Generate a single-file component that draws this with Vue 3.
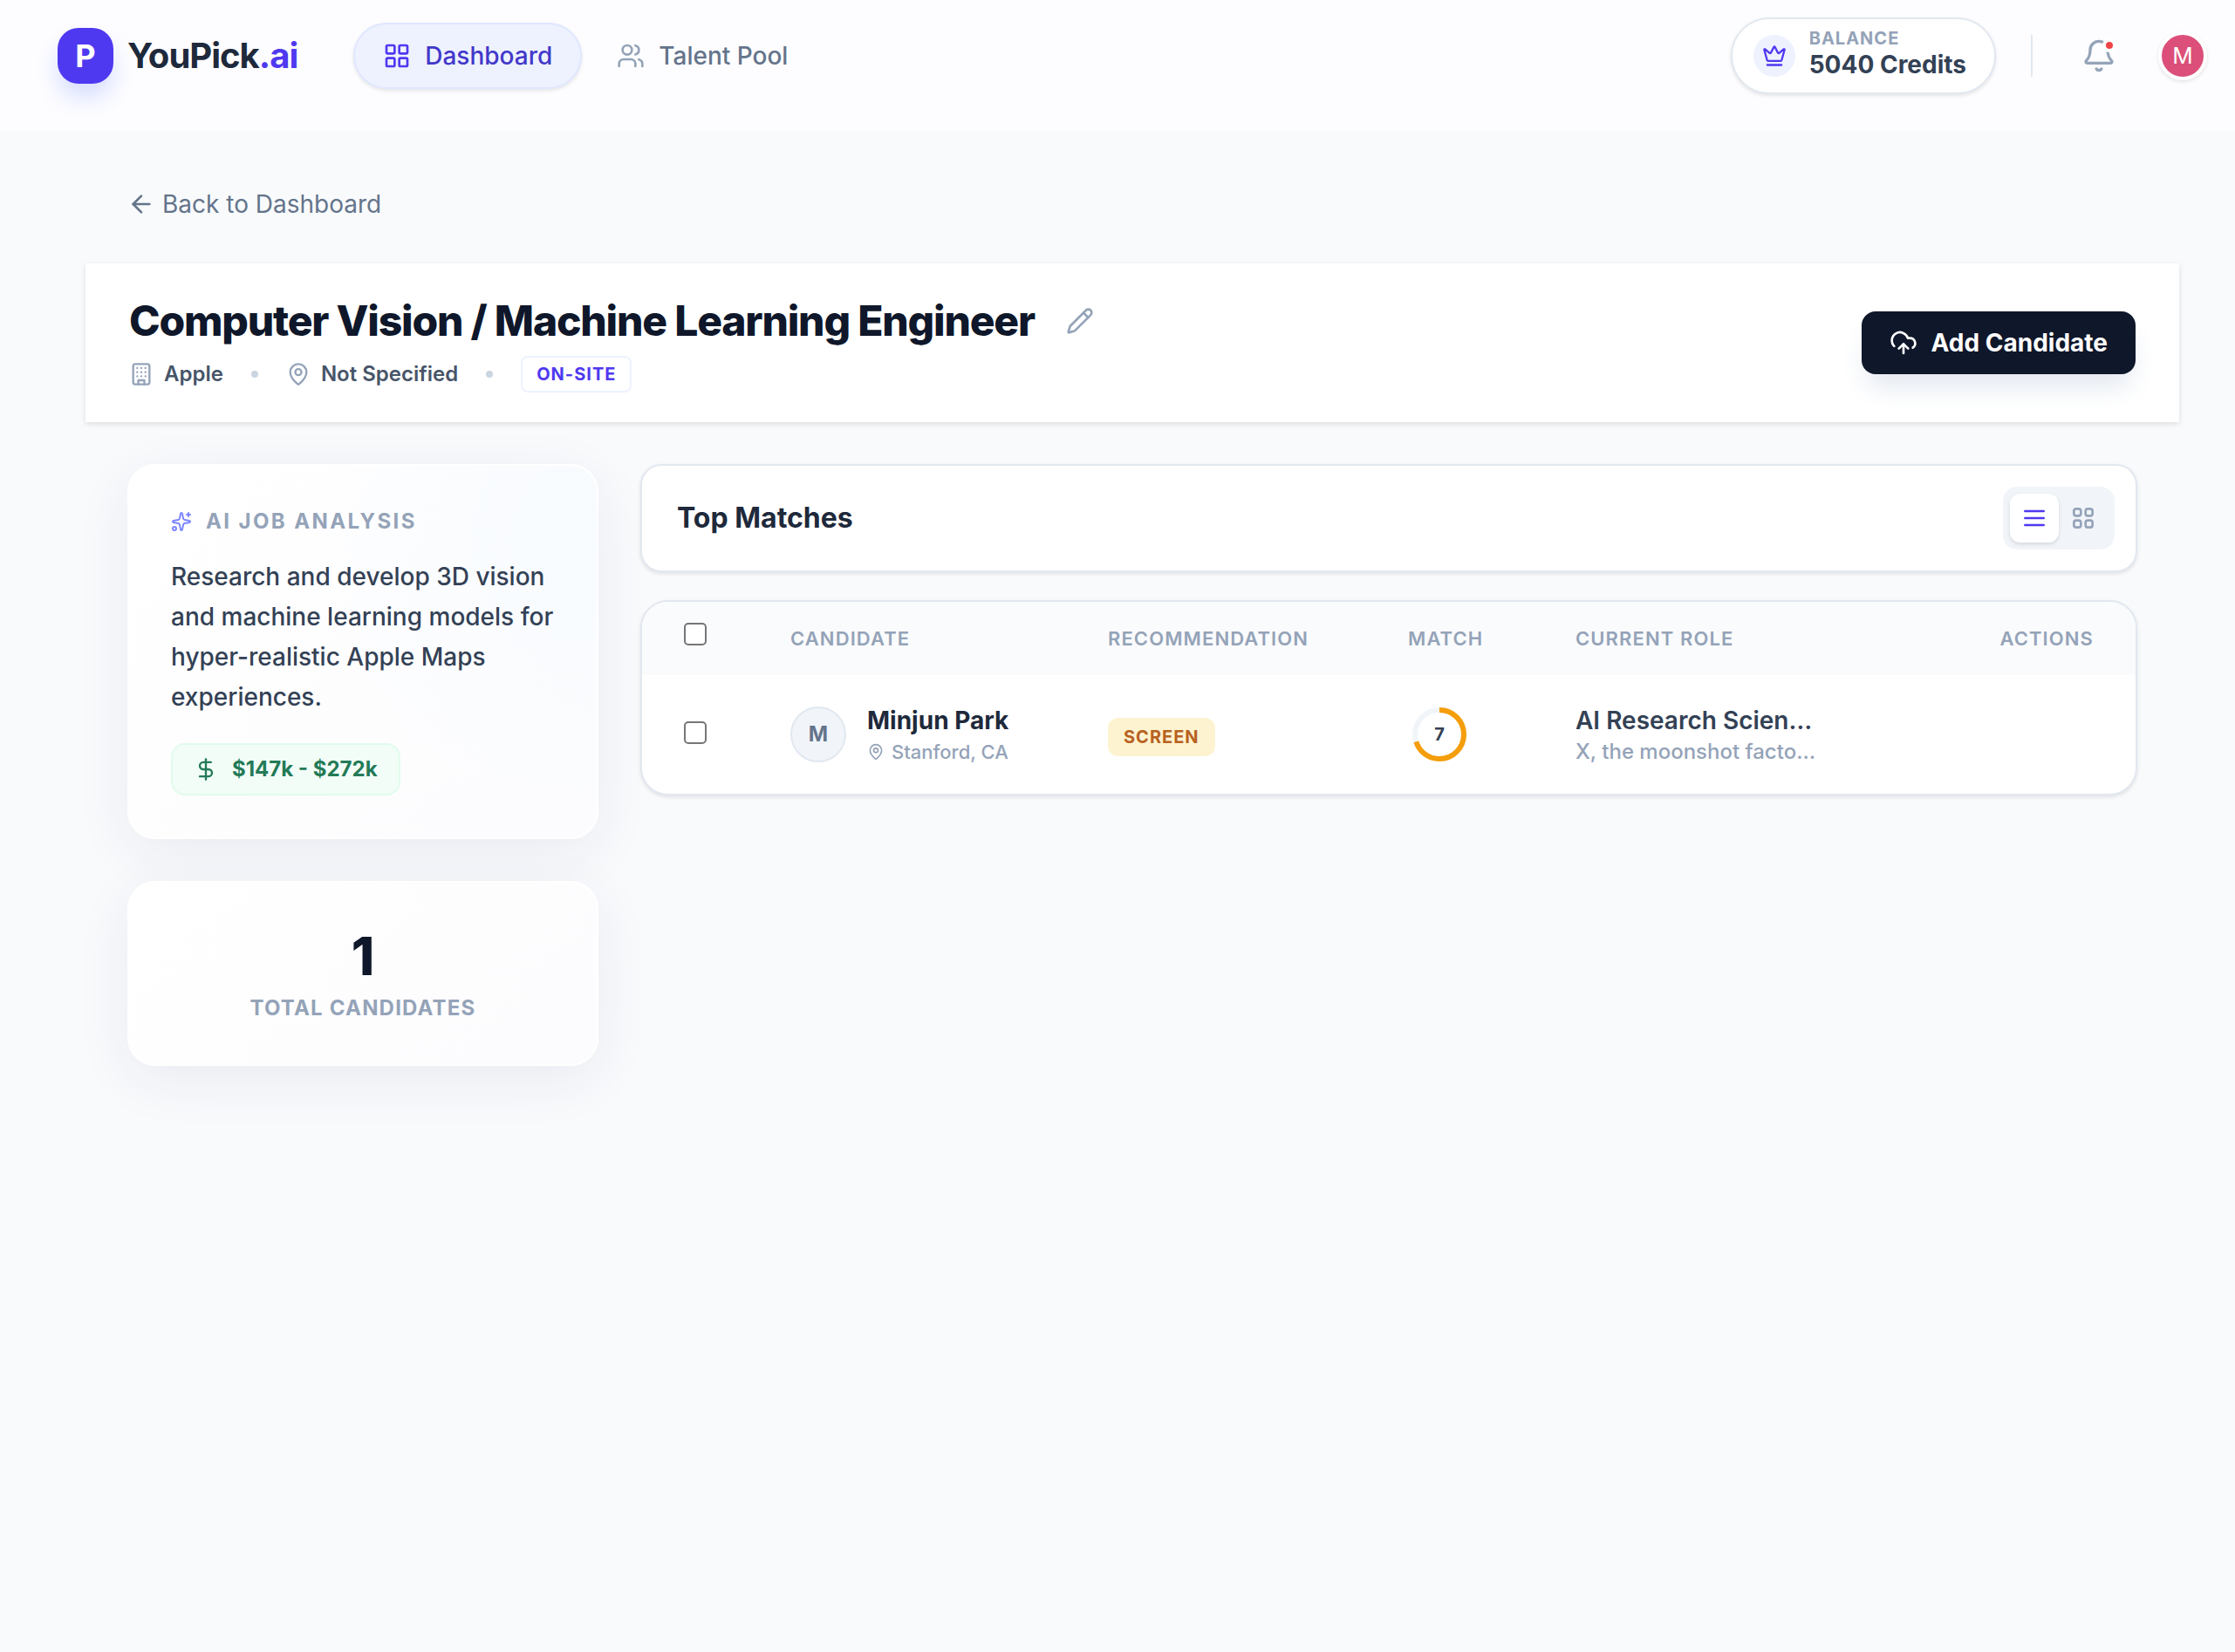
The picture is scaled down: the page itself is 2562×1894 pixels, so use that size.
<script setup>
import { ref } from 'vue'

const view = ref('list')
const selected = ref([])

const job = {
  title: 'Computer Vision / Machine Learning Engineer',
  company: 'Apple',
  location: 'Not Specified',
  workMode: 'On-site',
  summary:
    'Research and develop 3D vision and machine learning models for hyper-realistic Apple Maps experiences.',
  salary: '$147k - $272k',
}

const candidates = [
  {
    id: 1,
    name: 'Minjun Park',
    location: 'Stanford, CA',
    recommendation: 'Screen',
    score: 7,
    role: 'AI Research Scien…',
    company: 'X, the moonshot facto…',
  },
]

// match ring, score is out of 10
const ringLength = 2 * Math.PI * 28
const ringDash = (score) => `${(ringLength * score) / 10} ${ringLength}`

function toggleAll(e) {
  selected.value = e.target.checked ? candidates.map((c) => c.id) : []
}
</script>

<template>
  <div class="page">
    <header class="topbar">
      <a href="#" class="brand">
        <span class="brandMark">P</span>
        <span class="brandName">YouPick<span class="brandTld">.ai</span></span>
      </a>

      <nav class="nav">
        <a href="#" class="navItem active" aria-current="page">
          <svg class="icon i32" viewBox="0 0 24 24">
            <rect x="3" y="3" width="7" height="7" rx="1" />
            <rect x="14" y="3" width="7" height="7" rx="1" />
            <rect x="14" y="14" width="7" height="7" rx="1" />
            <rect x="3" y="14" width="7" height="7" rx="1" />
          </svg>
          Dashboard
        </a>
        <a href="#" class="navItem">
          <svg class="icon i32" viewBox="0 0 24 24">
            <path d="M16 21v-2a4 4 0 0 0-4-4H6a4 4 0 0 0-4 4v2" />
            <circle cx="9" cy="7" r="4" />
            <path d="M22 21v-2a4 4 0 0 0-3-3.87" />
            <path d="M16 3.13a4 4 0 0 1 0 7.75" />
          </svg>
          Talent Pool
        </a>
      </nav>

      <div class="account">
        <a href="#" class="balance">
          <span class="balanceIcon">
            <svg class="icon i28" viewBox="0 0 24 24">
              <path d="M11.562 3.266a.5.5 0 0 1 .876 0L15.39 8.87a1 1 0 0 0 1.516.294L21.183 5.5a.5.5 0 0 1 .798.519l-2.834 10.246a1 1 0 0 1-.956.734H5.81a1 1 0 0 1-.957-.734L2.02 6.02a.5.5 0 0 1 .798-.519l4.276 3.664a1 1 0 0 0 1.516-.294z" />
              <path d="M5 21h14" />
            </svg>
          </span>
          <span class="balanceText">
            <span class="balanceLabel">BALANCE</span>
            <span class="balanceValue">5040 Credits</span>
          </span>
        </a>
        <span class="divider"></span>
        <button class="bell" type="button" aria-label="Notifications">
          <svg class="icon i40" viewBox="0 0 24 24">
            <path d="M10.268 21a2 2 0 0 0 3.464 0" />
            <path d="M3.262 15.326A1 1 0 0 0 4 17h16a1 1 0 0 0 .74-1.673C19.41 13.956 18 12.499 18 8A6 6 0 0 0 6 8c0 4.499-1.411 5.956-2.738 7.326" />
          </svg>
          <span class="bellDot"></span>
        </button>
        <button class="userAvatar" type="button" aria-label="Account menu">M</button>
      </div>
    </header>

    <main class="main">
      <a href="#" class="back">
        <svg class="icon i32" viewBox="0 0 24 24">
          <path d="m12 19-7-7 7-7" />
          <path d="M19 12H5" />
        </svg>
        Back to Dashboard
      </a>

      <section class="jobHeader">
        <div class="jobInfo">
          <div class="titleRow">
            <h1>{{ job.title }}</h1>
            <button class="edit" type="button" aria-label="Edit title">
              <svg class="icon i32" viewBox="0 0 24 24">
                <path d="M21.174 6.812a1 1 0 0 0-3.986-3.987L3.842 16.174a2 2 0 0 0-.5.83l-1.321 4.352a.5.5 0 0 0 .623.622l4.353-1.32a2 2 0 0 0 .83-.497z" />
                <path d="m15 5 4 4" />
              </svg>
            </button>
          </div>
          <div class="meta">
            <span class="metaItem">
              <svg class="icon i28" viewBox="0 0 24 24">
                <rect x="4" y="2" width="16" height="20" rx="2" />
                <path d="M9 22v-4h6v4M8 6h.01M16 6h.01M12 6h.01M12 10h.01M12 14h.01M16 10h.01M16 14h.01M8 10h.01M8 14h.01" />
              </svg>
              {{ job.company }}
            </span>
            <span class="dot"></span>
            <span class="metaItem">
              <svg class="icon i28" viewBox="0 0 24 24">
                <path d="M20 10c0 4.993-5.539 10.193-7.399 11.799a1 1 0 0 1-1.202 0C9.539 20.193 4 14.993 4 10a8 8 0 0 1 16 0" />
                <circle cx="12" cy="10" r="3" />
              </svg>
              {{ job.location }}
            </span>
            <span class="dot"></span>
            <span class="mode">{{ job.workMode }}</span>
          </div>
        </div>
        <button class="addBtn" type="button">
          <svg class="icon i32" viewBox="0 0 24 24">
            <path d="M12 13v8" />
            <path d="M4 14.899A7 7 0 1 1 15.71 8h1.79a4.5 4.5 0 0 1 2.5 8.242" />
            <path d="m8 17 4-4 4 4" />
          </svg>
          Add Candidate
        </button>
      </section>

      <div class="columns">
        <aside class="side">
          <section class="glass">
            <h2 class="eyebrow">
              <svg class="icon i24" viewBox="0 0 24 24">
                <path d="M11.017 2.814a1 1 0 0 1 1.966 0l1.051 5.558a2 2 0 0 0 1.594 1.594l5.558 1.051a1 1 0 0 1 0 1.966l-5.558 1.051a2 2 0 0 0-1.594 1.594l-1.051 5.558a1 1 0 0 1-1.966 0l-1.051-5.558a2 2 0 0 0-1.594-1.594l-5.558-1.051a1 1 0 0 1 0-1.966l5.558-1.051a2 2 0 0 0 1.594-1.594z" />
                <path d="M20 2v4M22 4h-4" />
                <circle cx="4" cy="20" r="2" />
              </svg>
              AI Job Analysis
            </h2>
            <p class="summary">{{ job.summary }}</p>
            <span class="salary">
              <svg class="icon i28" viewBox="0 0 24 24">
                <path d="M12 2v20" />
                <path d="M17 5H9.5a3.5 3.5 0 0 0 0 7h5a3.5 3.5 0 0 1 0 7H6" />
              </svg>
              {{ job.salary }}
            </span>
          </section>

          <section class="glass total">
            <span class="totalValue">{{ candidates.length }}</span>
            <span class="totalLabel">Total Candidates</span>
          </section>
        </aside>

        <div class="results">
          <section class="toolbar">
            <h2>Top Matches</h2>
            <div class="toggle">
              <button type="button" :class="{ on: view === 'list' }" aria-label="List view" @click="view = 'list'">
                <svg class="icon i32" viewBox="0 0 24 24">
                  <path d="M4 6h16M4 12h16M4 18h16" />
                </svg>
              </button>
              <button type="button" :class="{ on: view === 'grid' }" aria-label="Grid view" @click="view = 'grid'">
                <svg class="icon i32" viewBox="0 0 24 24">
                  <rect x="4" y="4" width="6" height="6" rx="2" />
                  <rect x="14" y="4" width="6" height="6" rx="2" />
                  <rect x="4" y="14" width="6" height="6" rx="2" />
                  <rect x="14" y="14" width="6" height="6" rx="2" />
                </svg>
              </button>
            </div>
          </section>

          <div class="tableWrap">
            <table>
              <thead>
                <tr>
                  <th class="colCheck">
                    <input
                      type="checkbox"
                      aria-label="Select all"
                      :checked="selected.length === candidates.length"
                      @change="toggleAll"
                    />
                  </th>
                  <th class="colName">Candidate</th>
                  <th class="colRec">Recommendation</th>
                  <th class="colMatch">Match</th>
                  <th>Current Role</th>
                  <th class="right">Actions</th>
                </tr>
              </thead>
              <tbody>
                <tr v-for="c in candidates" :key="c.id">
                  <td>
                    <input v-model="selected" type="checkbox" :value="c.id" :aria-label="`Select ${c.name}`" />
                  </td>
                  <td>
                    <div class="person">
                      <span class="avatar">{{ c.name[0] }}</span>
                      <div>
                        <div class="name">{{ c.name }}</div>
                        <div class="place">
                          <svg class="icon i20" viewBox="0 0 24 24">
                            <path d="M20 10c0 4.993-5.539 10.193-7.399 11.799a1 1 0 0 1-1.202 0C9.539 20.193 4 14.993 4 10a8 8 0 0 1 16 0" />
                            <circle cx="12" cy="10" r="3" />
                          </svg>
                          {{ c.location }}
                        </div>
                      </div>
                    </div>
                  </td>
                  <td>
                    <span class="badge">{{ c.recommendation }}</span>
                  </td>
                  <td>
                    <div class="ring">
                      <svg viewBox="0 0 72 72">
                        <circle class="track" cx="36" cy="36" r="28" />
                        <circle
                          class="bar"
                          cx="36"
                          cy="36"
                          r="28"
                          :stroke-dasharray="ringDash(c.score)"
                          transform="rotate(-90 36 36)"
                        />
                      </svg>
                      <span>{{ c.score }}</span>
                    </div>
                  </td>
                  <td>
                    <div class="role">{{ c.role }}</div>
                    <div class="company">{{ c.company }}</div>
                  </td>
                  <td></td>
                </tr>
              </tbody>
            </table>
          </div>
        </div>
      </div>
    </main>
  </div>
</template>

<style>
body {
  background: #f9fafc;
}
</style>

<style scoped>
.page {
  min-height: 100vh;
  font-family: Inter, 'Liberation Sans', sans-serif;
  font-size: 28px;
  line-height: 40px;
  color: #1e293b;
}

.page *,
.page *::before {
  box-sizing: border-box;
}

a {
  color: inherit;
  text-decoration: none;
}

button {
  padding: 0;
  border: 0;
  background: none;
  font: inherit;
  color: inherit;
  cursor: pointer;
}

h1,
h2,
p {
  margin: 0;
}

.icon {
  display: block;
  flex-shrink: 0;
  fill: none;
  stroke: currentColor;
  stroke-width: 2;
  stroke-linecap: round;
  stroke-linejoin: round;
}

.i20 { width: 20px; height: 20px; }
.i24 { width: 24px; height: 24px; }
.i28 { width: 28px; height: 28px; }
.i32 { width: 32px; height: 32px; }
.i40 { width: 40px; height: 40px; }

/* top bar */
.topbar {
  display: flex;
  align-items: center;
  padding: 20px 32px 42px 66px;
  background: #fdfdff;
}

.brand {
  display: flex;
  align-items: center;
  gap: 16px;
  margin-right: 64px;
}

.brandMark {
  display: grid;
  place-items: center;
  width: 64px;
  height: 64px;
  border-radius: 24px;
  background: #4f39f0;
  box-shadow: 0 16px 28px -2px #d3dbfe;
  color: #fff;
  font-size: 36px;
  font-weight: 700;
}

.brandName {
  font-size: 40px;
  font-weight: 700;
  letter-spacing: -0.025em;
}

.brandTld {
  color: #4f39f0;
}

.nav {
  display: flex;
  gap: 6px;
}

.navItem {
  display: flex;
  align-items: center;
  gap: 16px;
  padding: 16px 32px;
  border: 2px solid transparent;
  border-radius: 38px;
  font-weight: 500;
  color: #64748b;
}

.navItem .icon {
  color: #94a3b8;
}

.navItem.active {
  border-color: #e0e7ff;
  background: #eef2ff;
  box-shadow: 0 2px 4px rgba(0, 0, 0, 0.1);
  color: #4338ca;
}

.navItem.active .icon {
  color: #4f39f0;
}

.account {
  display: flex;
  align-items: center;
  margin-left: auto;
}

.balance {
  display: flex;
  align-items: center;
  gap: 16px;
  padding: 12px 32px 12px 24px;
  border: 2px solid #e2e8f0;
  border-radius: 44px;
  background: #fff;
  box-shadow: 0 2px 4px rgba(0, 0, 0, 0.1);
}

.balanceIcon {
  display: grid;
  place-items: center;
  width: 48px;
  height: 48px;
  border-radius: 50%;
  background: #eef2ff;
  color: #4f39f0;
}

.balanceText {
  display: flex;
  flex-direction: column;
}

.balanceLabel {
  font-size: 20px;
  line-height: 20px;
  font-weight: 700;
  letter-spacing: 0.05em;
  color: #94a3b8;
}

.balanceValue {
  font-weight: 700;
  color: #334155;
}

.divider {
  width: 2px;
  height: 48px;
  margin: 0 40px;
  background: #e2e8f0;
}

.bell {
  position: relative;
  padding: 16px;
  margin-right: 32px;
  color: #94a3b8;
}

.bellDot {
  position: absolute;
  top: 16px;
  right: 16px;
  width: 16px;
  height: 16px;
  border: 4px solid #fff;
  border-radius: 50%;
  background: #ef4444;
}

.userAvatar {
  width: 56px;
  height: 56px;
  border: 4px solid #fff;
  border-radius: 50%;
  background: #db4f7a;
  box-shadow: 0 2px 4px rgba(0, 0, 0, 0.1);
  color: #fff;
  font-size: 26px;
}

/* job header */
.main {
  padding: 64px 112px 64px 146px;
}

.back {
  display: flex;
  align-items: center;
  gap: 8px;
  width: fit-content;
  color: #64748b;
}

.jobHeader {
  display: flex;
  align-items: center;
  justify-content: space-between;
  margin: 48px -48px 48px;
  padding: 34px 50px;
  background: #fff;
  box-shadow: 0 2px 6px rgba(0, 0, 0, 0.12);
}

.jobInfo {
  display: flex;
  flex-direction: column;
  gap: 8px;
}

.titleRow {
  display: flex;
  align-items: center;
  gap: 36px;
}

h1 {
  font-size: 48px;
  line-height: 64px;
  font-weight: 800;
  letter-spacing: -0.025em;
  color: #0f172a;
}

.edit {
  color: #94a3b8;
}

.meta {
  display: flex;
  align-items: center;
  gap: 32px;
  font-size: 24px;
  font-weight: 600;
  color: #475569;
}

.metaItem {
  display: flex;
  align-items: center;
  gap: 12px;
}

.metaItem .icon {
  color: #94a3b8;
}

.dot {
  width: 8px;
  height: 8px;
  border-radius: 50%;
  background: #cbd5e1;
}

.mode {
  padding: 4px 16px;
  border: 2px solid #eef2ff;
  border-radius: 8px;
  font-size: 20px;
  line-height: 30px;
  font-weight: 700;
  letter-spacing: 0.05em;
  text-transform: uppercase;
  color: #4f39f0;
}

.addBtn {
  display: flex;
  align-items: center;
  gap: 16px;
  padding: 16px 32px;
  border-radius: 16px;
  background: #0f172a;
  box-shadow: 0 20px 30px -6px #e2e8f0;
  color: #fff;
  font-weight: 700;
}

/* left column */
.columns {
  display: flex;
  align-items: flex-start;
  gap: 48px;
}

.side {
  display: flex;
  flex-direction: column;
  gap: 48px;
  width: 540px;
  flex-shrink: 0;
}

.glass {
  padding: 48px;
  border: 2px solid #fff;
  border-radius: 32px;
  background: radial-gradient(circle at 100% 20%, #f7fbfe, rgba(253, 253, 255, 0) 50%),
    linear-gradient(135deg, #fff, #fcfcfe);
  box-shadow: 0 16px 64px rgba(31, 38, 105, 0.07);
}

.eyebrow {
  display: flex;
  align-items: center;
  gap: 16px;
  font-size: 24px;
  line-height: 32px;
  font-weight: 700;
  letter-spacing: 0.1em;
  text-transform: uppercase;
  color: #94a3b8;
}

.eyebrow .icon {
  color: #7c86ff;
}

.summary {
  margin: 24px 0 30px;
  line-height: 46px;
  font-weight: 500;
  color: #334155;
}

.salary {
  display: flex;
  align-items: center;
  gap: 16px;
  width: fit-content;
  padding: 12px 24px;
  border: 2px solid #e0fcec;
  border-radius: 16px;
  background: #f2fdf7;
  font-size: 24px;
  line-height: 32px;
  font-weight: 700;
  color: #237a57;
}

.total {
  display: flex;
  flex-direction: column;
  align-items: center;
  gap: 8px;
  background: linear-gradient(135deg, #fff, #fcfcfe);
}

.totalValue {
  font-size: 60px;
  line-height: 72px;
  font-weight: 800;
  color: #0f172a;
}

.totalLabel {
  font-size: 24px;
  line-height: 32px;
  font-weight: 700;
  letter-spacing: 0.05em;
  text-transform: uppercase;
  color: #94a3b8;
}

/* results */
.results {
  display: flex;
  flex-direction: column;
  gap: 32px;
  flex: 1;
  min-width: 0;
}

.toolbar {
  display: flex;
  align-items: center;
  justify-content: space-between;
  padding: 24px 24px 24px 40px;
  border: 2px solid #e2e8f0;
  border-radius: 24px;
  background: #fff;
  box-shadow: 0 2px 4px rgba(0, 0, 0, 0.1);
}

.toolbar h2 {
  font-size: 32px;
  font-weight: 700;
}

.toggle {
  display: flex;
  padding: 8px;
  border-radius: 16px;
  background: #f1f5f9;
}

.toggle button {
  padding: 12px;
  border-radius: 12px;
  color: #94a3b8;
}

.toggle button.on {
  background: #fff;
  box-shadow: 0 2px 4px rgba(0, 0, 0, 0.12);
  color: #4f39f0;
}

.tableWrap {
  overflow: hidden;
  border: 2px solid #e2e8f0;
  border-radius: 32px;
  background: #fff;
  box-shadow: 0 2px 4px rgba(0, 0, 0, 0.1);
}

table {
  width: 100%;
  table-layout: fixed;
  border-collapse: collapse;
}

th {
  padding: 24px 48px;
  background: #fafbfd;
  font-size: 22px;
  line-height: 36px;
  font-weight: 600;
  letter-spacing: 0.05em;
  text-align: left;
  text-transform: uppercase;
  white-space: nowrap;
  color: #94a3b8;
}

td {
  padding: 32px 48px;
  font-size: 32px;
  line-height: 48px;
}

.colCheck { width: 122px; }
.colName { width: 364px; }
.colRec { width: 344px; }
.colMatch { width: 192px; }

th.right {
  text-align: right;
}

input[type='checkbox'] {
  appearance: none;
  width: 26px;
  height: 26px;
  margin: 0;
  border: 2px solid #767676;
  border-radius: 5px;
  background: #fff;
}

input[type='checkbox']:checked {
  border-color: #4f39f0;
  background: #4f39f0;
}

.person {
  display: flex;
  align-items: center;
  gap: 24px;
  white-space: nowrap;
}

.avatar {
  display: grid;
  place-items: center;
  width: 64px;
  height: 64px;
  border: 2px solid #e2e8f0;
  border-radius: 50%;
  background: #f1f5f9;
  font-size: 24px;
  font-weight: 700;
  color: #64748b;
}

.name {
  font-size: 28px;
  line-height: 40px;
  font-weight: 700;
}

.place {
  display: flex;
  align-items: center;
  gap: 8px;
  font-size: 22px;
  line-height: 32px;
  font-weight: 500;
  color: #94a3b8;
}

.badge {
  display: inline-block;
  padding: 6px 18px;
  border-radius: 12px;
  background: #fef3d0;
  font-size: 20px;
  line-height: 32px;
  font-weight: 700;
  letter-spacing: 0.05em;
  text-transform: uppercase;
  color: #b8621f;
}

.ring {
  display: grid;
  place-items: center;
  width: 72px;
  height: 72px;
  font-size: 20px;
  line-height: 24px;
  font-weight: 700;
  color: #334155;
}

.ring > * {
  grid-area: 1 / 1;
}

.ring circle {
  fill: none;
  stroke-width: 6;
}

.ring .track {
  stroke: #f1f5f9;
}

.ring .bar {
  stroke: #f59e0b;
}

.role {
  font-size: 28px;
  line-height: 40px;
  font-weight: 600;
  white-space: nowrap;
  color: #334155;
}

.company {
  font-size: 24px;
  line-height: 32px;
  font-weight: 500;
  white-space: nowrap;
  color: #94a3b8;
}
</style>
